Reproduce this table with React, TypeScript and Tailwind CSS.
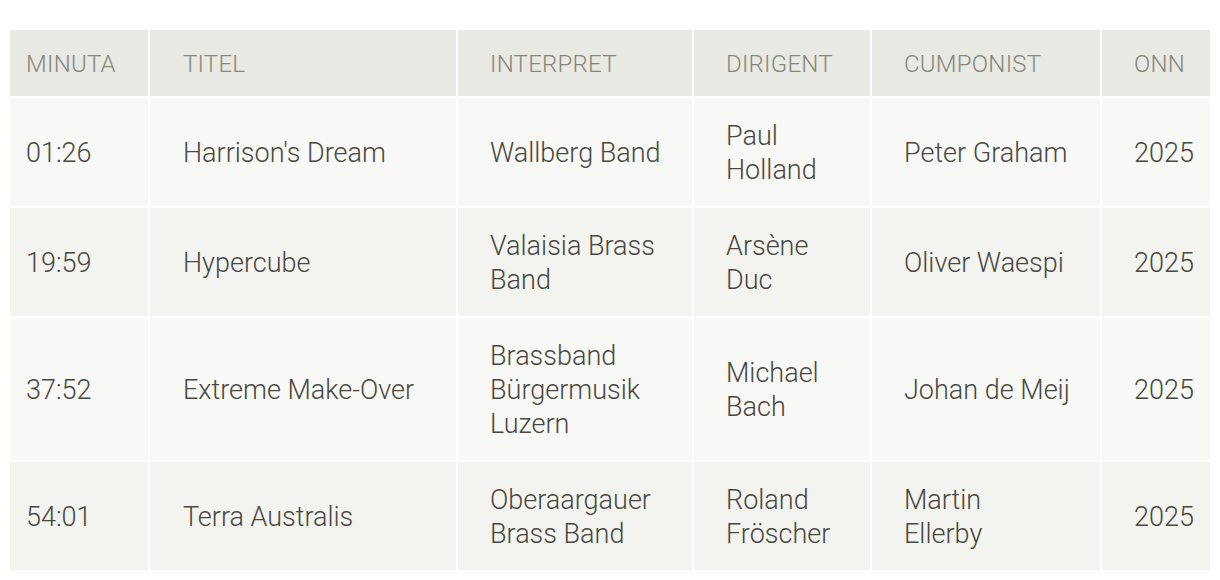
import React from "react";

type Row = { min: string; titel: string[]; interp: string[]; dir: string[]; cump: string[]; onn: string };

const rows: Row[] = [
  { min: "01:26", titel: ["Harrison's Dream"], interp: ["Wallberg Band"], dir: ["Paul", "Holland"], cump: ["Peter Graham"], onn: "2025" },
  { min: "19:59", titel: ["Hypercube"], interp: ["Valaisia Brass", "Band"], dir: ["Arsène", "Duc"], cump: ["Oliver Waespi"], onn: "2025" },
  { min: "37:52", titel: ["Extreme Make-Over"], interp: ["Brassband", "Bürgermusik", "Luzern"], dir: ["Michael", "Bach"], cump: ["Johan de Meij"], onn: "2025" },
  { min: "54:01", titel: ["Terra Australis"], interp: ["Oberaargauer", "Brass Band"], dir: ["Roland", "Fröscher"], cump: ["Martin", "Ellerby"], onn: "2025" },
];

function Lines({ lines }: { lines: string[] }) {
  return (
    <>
      {lines.map((l, i) => (
        <div key={i} className="whitespace-nowrap">
          {l}
        </div>
      ))}
    </>
  );
}

export default function App() {
  const th =
    "text-left align-middle font-light uppercase text-[24px] leading-[34px] text-[#87877a] bg-[#e9e9e4] pt-[17px] pb-[15px] tracking-[0.01em]";
  const td = "align-middle pt-[21px] pb-[19px] text-[#48483f]";
  return (
    <div
      className="bg-white px-2 pt-[28px] pb-2 text-[27px] leading-[34px] font-light"
      style={{ fontFamily: "Roboto, 'Noto Sans', sans-serif" }}
    >
      <table className="w-full table-fixed border-separate border-spacing-[2px]">
        <thead>
          <tr>
            <th className={`${th} w-[138px] pl-4`}>Minuta</th>
            <th className={`${th} w-[306px] pl-[33px]`}>Titel</th>
            <th className={`${th} w-[234px] pl-8`}>Interpret</th>
            <th className={`${th} w-[176px] pl-8`}>Dirigent</th>
            <th className={`${th} w-[228px] pl-8`}>Cumponist</th>
            <th className={`${th} w-[108px] pl-8`}>Onn</th>
          </tr>
        </thead>
        <tbody>
          {rows.map((r, i) => {
            const bg = i % 2 === 0 ? "bg-[#f8f8f6]" : "bg-[#f3f3ef]";
            return (
              <tr key={i}>
                <td className={`${td} ${bg} pl-4`}>{r.min}</td>
                <td className={`${td} ${bg} pl-[33px]`}><Lines lines={r.titel} /></td>
                <td className={`${td} ${bg} pl-8`}><Lines lines={r.interp} /></td>
                <td className={`${td} ${bg} pl-8`}><Lines lines={r.dir} /></td>
                <td className={`${td} ${bg} pl-8`}><Lines lines={r.cump} /></td>
                <td className={`${td} ${bg} pl-8`}>{r.onn}</td>
              </tr>
            );
          })}
        </tbody>
      </table>
    </div>
  );
}
